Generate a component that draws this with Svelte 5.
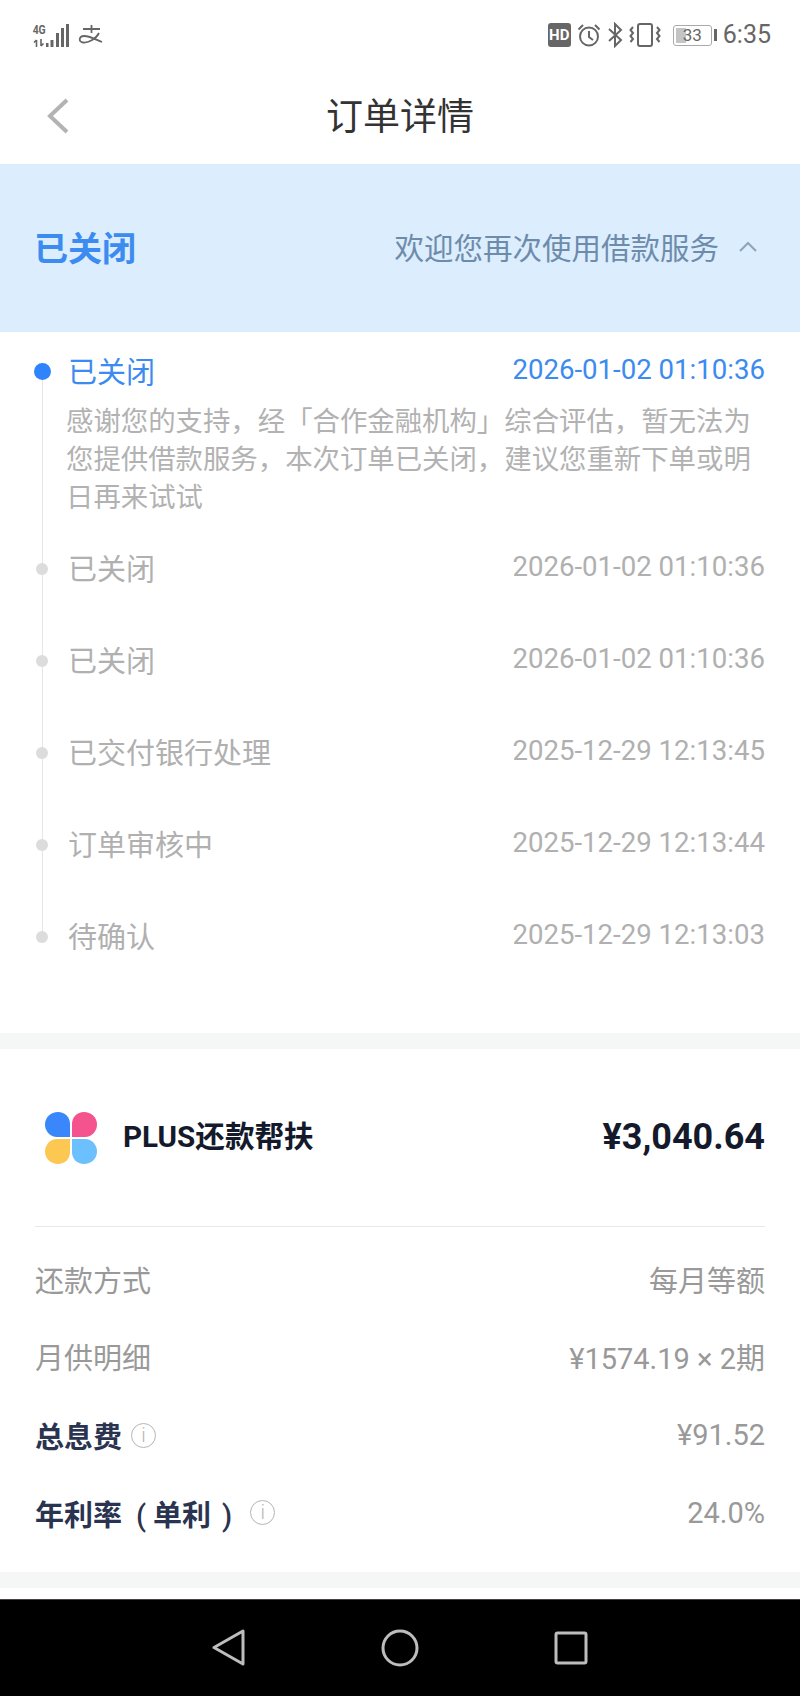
<script>
	const steps = [
		{ title: '已交付银行处理', time: '2025-12-29 12:13:45' },
		{ title: '订单审核中', time: '2025-12-29 12:13:44' },
		{ title: '待确认', time: '2025-12-29 12:13:03' }
	];
	const closed = { title: '已关闭', time: '2026-01-02 01:10:36' };
	const timeline = [closed, closed, ...steps];
</script>

<div class="page">
	<div class="statusbar">
		<div class="status-left">
			<div class="net">
				<span class="net-label">4G</span>
				<svg width="12" height="8" viewBox="0 0 12 8" class="net-arrows">
					<path d="M3.500 1V8M1 3.500L3.500 1M8 0V7M8 7L10.500 4.500" fill="none" stroke="#666" stroke-width="1.600" />
				</svg>
			</div>
			<svg width="25" height="23" viewBox="0 0 25 23" class="bars">
				<rect x="0" y="19" width="2.500" height="4" />
				<rect x="4.500" y="16" width="3" height="7" />
				<rect x="10" y="9" width="3" height="14" />
				<rect x="15" y="4" width="3" height="19" />
				<rect x="20" y="0" width="3" height="23" />
			</svg>
			<svg class="pay" width="26" height="22" viewBox="0 0 26 22" fill="none" stroke="#666" stroke-width="1.800">
				<path d="M5 5H22M13.500 1V9M21 9C18 15 10 19 5 18.500C0 18 1 12 6 12C12 12 19 16 24 18" />
			</svg>
		</div>
		<div class="status-right">
			<span class="hd">HD</span>
			<svg width="24" height="24" viewBox="0 0 24 24" fill="none" stroke="#666" stroke-width="2">
				<circle cx="12" cy="13.500" r="9" />
				<path d="M12 8V14L16 17M1.500 6.500L6 2M22.500 6.500L18 2" />
			</svg>
			<svg width="16" height="26" viewBox="0 0 16 26" fill="none" stroke="#666" stroke-width="2">
				<path d="M2 7L14 18L8 24V2L14 8L2 19" />
			</svg>
			<svg width="32" height="24" viewBox="0 0 32 24" fill="none" stroke="#666" stroke-width="2">
				<rect x="9" y="1" width="14" height="22" rx="2" />
				<path d="M4 4L1.500 7L4 10L1.500 13L4 16L1.500 19M28 4L30.500 7L28 10L30.500 13L28 16L30.500 19" stroke-width="2" />
			</svg>
			<div class="battery">
				<div class="battery-body">
					<div class="battery-fill"></div>
					<span>33</span>
				</div>
				<div class="battery-tip"></div>
			</div>
			<span class="clock">6:35</span>
		</div>
	</div>

	<header class="nav">
		<svg class="back" width="24" height="36" viewBox="0 0 24 36" fill="none" stroke="#b3b3b3" stroke-width="4">
			<path d="M21 2L4 18L21 34" />
		</svg>
		<h1>订单详情</h1>
	</header>

	<section class="banner">
		<span class="banner-state">已关闭</span>
		<div class="banner-right">
			<span>欢迎您再次使用借款服务</span>
			<svg width="20" height="12" viewBox="0 0 20 12" fill="none" stroke="#8fa6bd" stroke-width="2.200">
				<path d="M2 11L10 3L18 11" />
			</svg>
		</div>
	</section>

	<section class="timeline">
		<div class="item active">
			<div class="item-head">
				<span class="dot"></span>
				<span class="item-title">已关闭</span>
				<span class="item-time">2026-01-02 01:10:36</span>
			</div>
			<p class="item-desc">感谢您的支持，经「合作金融机构」综合评估，暂无法为您提供借款服务，本次订单已关闭，建议您重新下单或明日再来试试</p>
		</div>
		{#each timeline as step, i}
			<div class="item" class:last={i === timeline.length - 1}>
				<div class="item-head">
					<span class="dot"></span>
					<span class="item-title">{step.title}</span>
					<span class="item-time">{step.time}</span>
				</div>
			</div>
		{/each}
	</section>

	<div class="gap"></div>

	<section class="card">
		<div class="product">
			<svg class="logo" width="54" height="54" viewBox="0 0 54 54">
				<path d="M14 1C21 1 26 6 26 13V26H13C6 26 1 20 1 13.500C1 6 7 1 14 1Z" fill="#3a87fb" />
				<path d="M40 1C33 1 28 6 28 13V26H41C48 26 53 20 53 13.500C53 6 47 1 40 1Z" fill="#f4538e" />
				<path d="M14 53C21 53 26 48 26 41V28H13C6 28 1 34 1 40.500C1 48 7 53 14 53Z" fill="#fdc851" />
				<path d="M40 53C33 53 28 48 28 41V28H41C48 28 53 34 53 40.500C53 48 47 53 40 53Z" fill="#6bc0fd" />
			</svg>
			<span class="product-name">PLUS还款帮扶</span>
			<span class="product-amount">¥3,040.64</span>
		</div>
		<div class="rows">
			<div class="row"><span class="label">还款方式</span><span class="value">每月等额</span></div>
			<div class="row"><span class="label">月供明细</span><span class="value">¥1574.19 × 2期</span></div>
			<div class="row lower">
				<span class="label strong">总息费</span>
				<span class="info">i</span>
				<span class="value">¥91.52</span>
			</div>
			<div class="row">
				<span class="label strong">年利率<span class="paren open">(</span>单利<span class="paren close">)</span></span>
				<span class="info wide">i</span>
				<span class="value">24.0%</span>
			</div>
		</div>
	</section>

	<div class="gap"></div>
	<div class="tail"></div>

	<nav class="softkeys">
		<svg width="34" height="38" viewBox="0 0 34 38" fill="none" stroke="#bdbdbd" stroke-width="3" stroke-linejoin="round">
			<path d="M31 2V35L2 18.500Z" />
		</svg>
		<svg width="38" height="38" viewBox="0 0 38 38" fill="none" stroke="#bdbdbd" stroke-width="3">
			<circle cx="19" cy="19" r="17" />
		</svg>
		<svg width="34" height="34" viewBox="0 0 34 34" fill="none" stroke="#bdbdbd" stroke-width="3" stroke-linejoin="round">
			<rect x="2" y="2" width="30" height="30" rx="1.500" />
		</svg>
	</nav>
</div>

<style>
	:global(body) {
		margin: 0;
		background: #fff;
	}

	.page {
		width: 800px;
		height: 1696px;
		display: flex;
		flex-direction: column;
		overflow: hidden;
		font-family: "Roboto", "Noto Sans CJK SC", sans-serif;
		color: #333;
	}

	.statusbar {
		height: 70px;
		flex: none;
		display: flex;
		align-items: center;
		justify-content: space-between;
		padding: 0 29px 0 33px;
		box-sizing: border-box;
		color: #666;
	}

	.status-left {
		display: flex;
		align-items: center;
	}

	.net {
		display: flex;
		flex-direction: column;
		align-items: center;
		width: 12px;
		margin-right: 1px;
	}

	.net-label {
		font: 700 13px/12px "Roboto", sans-serif;
		transform: scaleX(0.8);
		margin-bottom: 3px;
	}

	.bars {
		fill: #666;
	}

	.pay {
		margin-left: 7px;
	}

	.status-right {
		display: flex;
		align-items: center;
		gap: 6px;
	}

	.hd {
		width: 23px;
		height: 24px;
		background: #666;
		color: #fff;
		border-radius: 3px;
		font: 700 15px/24px "Roboto", sans-serif;
		text-align: center;
	}

	.battery {
		display: flex;
		align-items: center;
		gap: 2px;
		margin-left: 6px;
	}

	.battery-body {
		position: relative;
		width: 37px;
		height: 19px;
		border: 1px solid #aaa;
		border-radius: 3px;
		text-align: center;
		font: 400 17px/19px "Roboto", sans-serif;
		color: #666;
	}

	.battery-body span {
		position: relative;
	}

	.battery-fill {
		position: absolute;
		left: 2px;
		top: 2px;
		bottom: 2px;
		width: 10px;
		background: #c4c4c4;
	}

	.battery-tip {
		width: 3px;
		height: 12px;
		background: #666;
	}

	.clock {
		font: 400 25px/30px "Roboto", sans-serif;
	}

	.nav {
		height: 94px;
		flex: none;
		position: relative;
		display: flex;
		align-items: center;
		justify-content: center;
	}

	.back {
		position: absolute;
		left: 46px;
		top: 28px;
	}

	h1 {
		margin: 0 0 7px;
		font-size: 37px;
		font-weight: 400;
		color: #333;
	}

	.banner {
		height: 168px;
		flex: none;
		box-sizing: border-box;
		background: #dcedfd;
		display: flex;
		align-items: center;
		justify-content: space-between;
		padding: 0 42px 4px 34px;
	}

	.banner-state {
		font-size: 34px;
		font-weight: 700;
		color: #3b8bf0;
	}

	.banner-right {
		display: flex;
		align-items: center;
		gap: 19px;
		font-size: 29.500px;
		color: #6d8cab;
	}

	.timeline {
		padding: 18px 35px 0 34px;
		height: 701px;
		box-sizing: border-box;
		flex: none;
	}

	.item {
		position: relative;
		padding-bottom: 52px;
	}

	.item::before {
		content: "";
		position: absolute;
		left: 7.500px;
		top: 20px;
		bottom: -18px;
		width: 1px;
		background: #e6e6e6;
	}

	.item.last::before {
		display: none;
	}

	.item.active {
		padding-bottom: 30px;
	}

	.item-head {
		display: flex;
		align-items: center;
		height: 40px;
		color: #b0b0b0;
	}

	.dot {
		position: relative;
		top: 2px;
		width: 12px;
		height: 12px;
		margin: 0 20px 0 2px;
		border-radius: 50%;
		background: #dcdcdc;
	}

	.active .dot {
		top: 1px;
		width: 17px;
		height: 17px;
		margin: 0 17px 0 0;
		background: #2f84fb;
	}

	.item-title {
		font-size: 29px;
	}

	.item-time {
		margin-left: auto;
		font: 400 27.600px/40px "Roboto", sans-serif;
	}

	.active .item-head {
		color: #3b8bf0;
	}

	.item-desc {
		margin: 13px 0 0 32px;
		font-size: 27.400px;
		line-height: 38px;
		color: #b2b2b2;
	}

	.gap {
		height: 16px;
		flex: none;
		background: #f5f6f6;
	}

	.card {
		height: 523px;
		flex: none;
		box-sizing: border-box;
		padding: 0 35px;
	}

	.product {
		height: 178px;
		display: flex;
		align-items: center;
		border-bottom: 1px solid #e8e8e8;
		padding: 0 0 0 9px;
		box-sizing: border-box;
	}

	.logo {
		margin-right: 25px;
	}

	.product-name {
		padding-bottom: 6px;
		font-size: 29.600px;
		font-weight: 700;
		color: #141a2b;
	}

	.product-amount {
		margin-left: auto;
		padding-bottom: 2px;
		font: 700 36px/40px "Roboto", sans-serif;
		color: #141a2b;
	}

	.rows {
		padding-top: 13px;
	}

	.row {
		height: 77.300px;
		display: flex;
		align-items: center;
	}

	.row.lower {
		margin-top: 2px;
	}

	.label {
		font-size: 29px;
		color: #999;
	}

	.label.strong {
		font-family: "Noto Sans CJK TC", sans-serif;
		font-weight: 700;
		color: #2a3350;
	}

	.paren {
		font-family: "Roboto", sans-serif;
		font-weight: 500;
	}

	.paren.open {
		margin: 0 7px 0 14px;
	}

	.paren.close {
		margin-left: 11px;
	}

	.value {
		margin-left: auto;
		font-size: 29px;
		color: #999;
	}

	.info {
		width: 23px;
		height: 23px;
		margin-left: 9px;
		border: 1px solid #b5b5b5;
		border-radius: 50%;
		color: #b5b5b5;
		font: 300 20px/23px "Roboto", sans-serif;
		text-align: center;
	}

	.info.wide {
		margin-left: 18px;
	}

	.tail {
		flex: 1;
	}

	.softkeys {
		height: 97px;
		flex: none;
		background: #000;
		border-top: 1px solid #444;
		box-sizing: border-box;
		display: flex;
		align-items: center;
		justify-content: center;
		gap: 135px;
	}
</style>
